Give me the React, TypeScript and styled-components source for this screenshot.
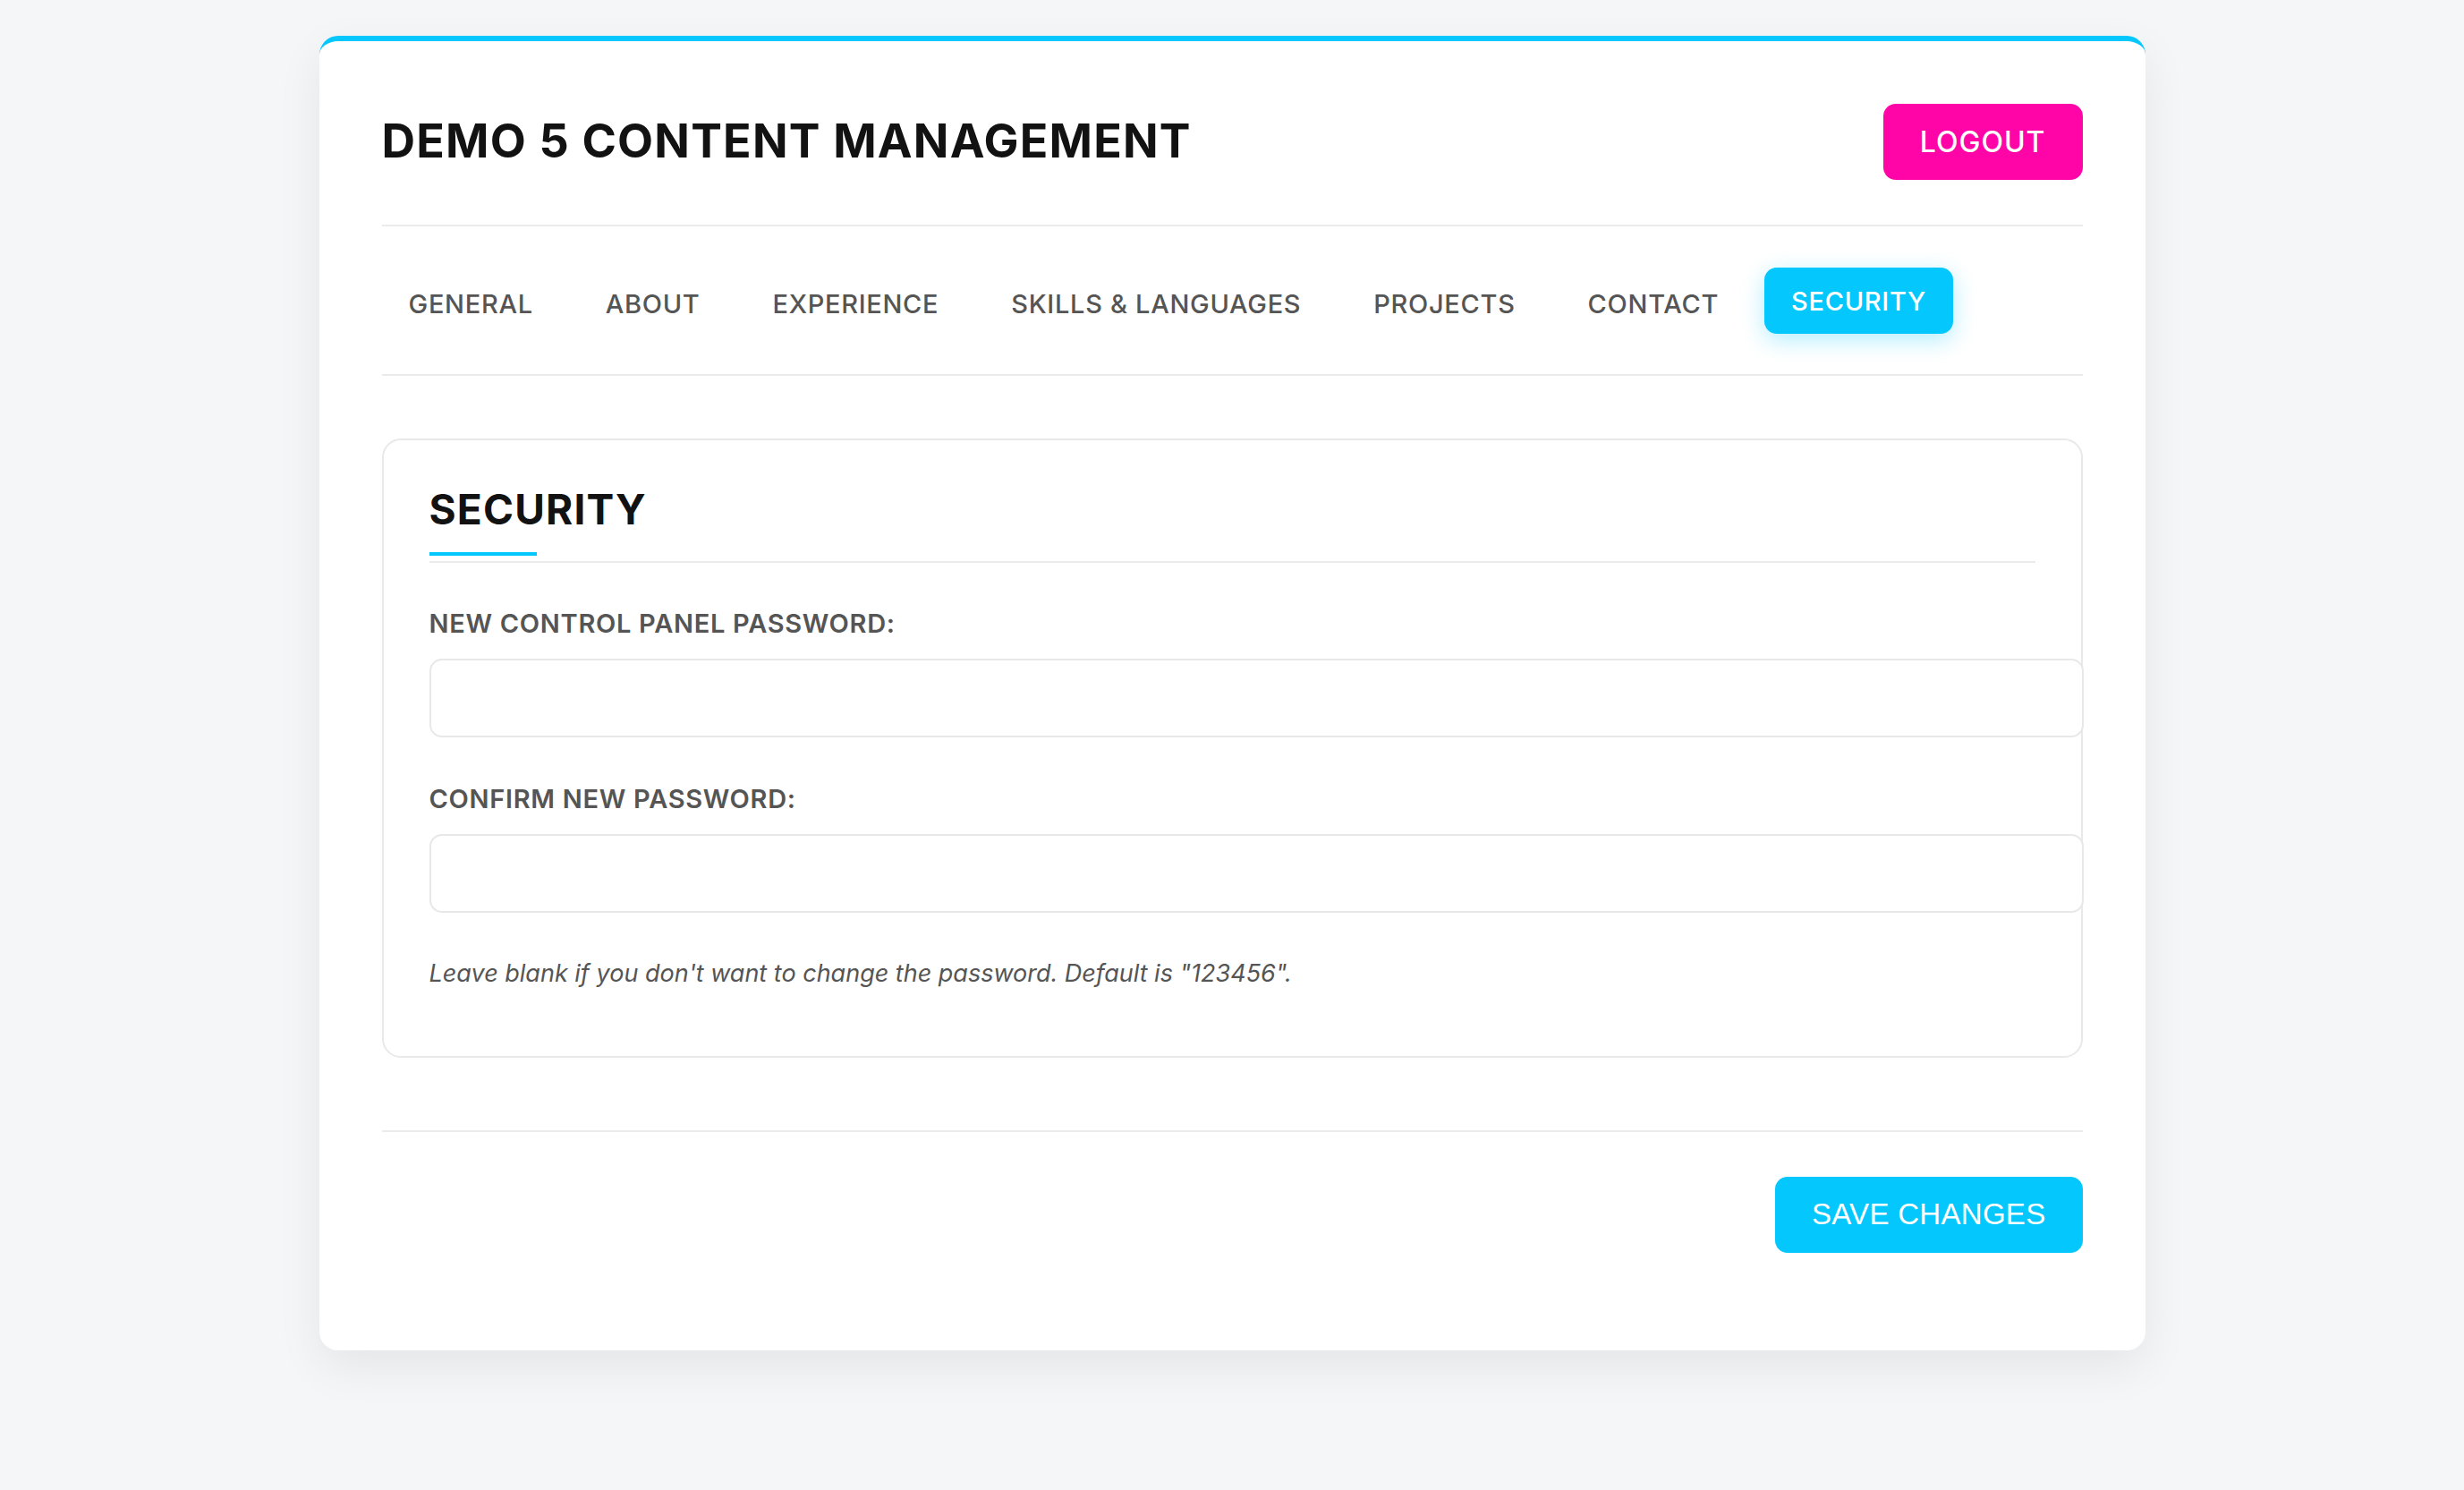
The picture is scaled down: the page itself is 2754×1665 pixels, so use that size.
import React from 'react'
import styled, { createGlobalStyle, css } from 'styled-components'

const COLORS = {
  CYAN: '#04c8fd',
  PINK: '#ff05a8',
  INK: '#121212',
  TEXT: '#555555',
  LINE: '#ebebeb',
  PAGE: '#f5f6f8'
}

const GlobalStyle = createGlobalStyle`
  html, body {
    margin: 0;
    padding: 0;
    background: ${COLORS.PAGE};
  }

  body {
    font-family: Inter, "Noto Sans", sans-serif;
    min-height: 100vh;
  }

  #root {
    padding: 40px 0 80px;
  }
`

const Card = styled('main')`
  box-sizing: border-box;
  width: 2041px;
  margin: 0 auto;
  padding: 70px;
  background: #ffffff;
  border-top: 6px solid ${COLORS.CYAN};
  border-radius: 21px;
  box-shadow: 0 18px 52px rgba(0, 0, 0, 0.07);
`

const Header = styled('header')`
  display: flex;
  align-items: center;
  justify-content: space-between;
  padding-bottom: 50px;
  border-bottom: 2px solid ${COLORS.LINE};
`

const Title = styled('h1')`
  margin: 0;
  font-size: 52px;
  font-weight: 700;
  line-height: 1.2;
  letter-spacing: 1.2px;
  color: ${COLORS.INK};
`

const PillButton = styled('button')<{ $color: string; $font?: string; $size: number }>`
  height: 85px;
  padding: 0 41px;
  border: none;
  border-radius: 14px;
  background: ${({ $color }) => $color};
  color: #ffffff;
  font-family: ${({ $font }) => $font || 'Inter, "Noto Sans", sans-serif'};
  font-size: ${({ $size }) => $size}px;
  font-weight: ${({ $font }) => ($font ? 400 : 500)};
  letter-spacing: ${({ $font }) => ($font ? '0.3px' : '1px')};
  text-transform: uppercase;
  cursor: pointer;
`

const Tabs = styled('nav')`
  display: flex;
  align-items: center;
  gap: 21px;
  padding: 49px 0 42px;
  border-bottom: 2px solid ${COLORS.LINE};
`

const Tab = styled('button')<{ $active?: boolean }>`
  height: 74px;
  padding: 0 30px;
  border: none;
  border-radius: 14px;
  background: transparent;
  color: ${COLORS.TEXT};
  font-family: Inter, "Noto Sans", sans-serif;
  font-size: 29px;
  font-weight: 500;
  letter-spacing: 0.7px;
  text-transform: uppercase;
  cursor: pointer;

  ${({ $active }) =>
    $active &&
    css`
      background: ${COLORS.CYAN};
      color: #ffffff;
      transform: translateY(-3px);
      box-shadow: 0 7px 26px rgba(4, 200, 253, 0.3);
    `}
`

const Panel = styled('section')`
  margin-top: 70px;
  padding: 50px 51px 51px;
  border: 2px solid #e9e9e9;
  border-radius: 21px;
`

const PanelHead = styled('div')`
  padding-bottom: 30px;
  margin-bottom: 51px;
  border-bottom: 2px solid ${COLORS.LINE};
`

const PanelTitle = styled('h2')`
  position: relative;
  margin: 0;
  font-size: 46px;
  font-weight: 700;
  line-height: 1.2;
  letter-spacing: 1.2px;
  color: ${COLORS.INK};

  &::after {
    content: '';
    position: absolute;
    left: 0;
    bottom: -24px;
    width: 120px;
    height: 4px;
    background: ${COLORS.CYAN};
  }
`

const Field = styled('div')`
  margin-bottom: 52px;
`

const Label = styled('label')`
  display: block;
  margin-bottom: 21px;
  font-size: 29px;
  font-weight: 600;
  line-height: 1.2;
  letter-spacing: 0.7px;
  color: ${COLORS.TEXT};
  text-transform: uppercase;
`

const Input = styled('input')`
  display: block;
  box-sizing: content-box;
  width: 100%;
  height: 34px;
  padding: 25px;
  border: 2px solid #e8e8e8;
  border-radius: 14px;
  background: #ffffff;
  font-family: Inter, "Noto Sans", sans-serif;
  font-size: 28px;
  line-height: 34px;
  outline: none;
`

const Hint = styled('p')`
  margin: 0 0 26px;
  font-size: 27px;
  font-style: italic;
  line-height: 31px;
  color: ${COLORS.TEXT};
`

const Footer = styled('footer')`
  display: flex;
  justify-content: flex-end;
  margin-top: 81px;
  padding: 50px 0 39px;
  border-top: 2px solid ${COLORS.LINE};
`

const tabs = ['General', 'About', 'Experience', 'Skills & Languages', 'Projects', 'Contact', 'Security']

const App: React.FC = () => {
  return (
    <>
      <GlobalStyle />
      <Card>
        <Header>
          <Title>DEMO 5 CONTENT MANAGEMENT</Title>
          <PillButton $color={COLORS.PINK} $size={32}>
            Logout
          </PillButton>
        </Header>

        <Tabs>
          {tabs.map((tab) => (
            <Tab key={tab} $active={tab === 'Security'}>
              {tab}
            </Tab>
          ))}
        </Tabs>

        <Panel>
          <PanelHead>
            <PanelTitle>SECURITY</PanelTitle>
          </PanelHead>

          <Field>
            <Label htmlFor="new-password">New Control Panel Password:</Label>
            <Input id="new-password" type="password" />
          </Field>

          <Field>
            <Label htmlFor="confirm-password">Confirm New Password:</Label>
            <Input id="confirm-password" type="password" />
          </Field>

          <Hint>Leave blank if you don't want to change the password. Default is "123456".</Hint>
        </Panel>

        <Footer>
          <PillButton $color={COLORS.CYAN} $font='"Liberation Sans", Arial, sans-serif' $size={33}>
            Save Changes
          </PillButton>
        </Footer>
      </Card>
    </>
  )
}

export default App
